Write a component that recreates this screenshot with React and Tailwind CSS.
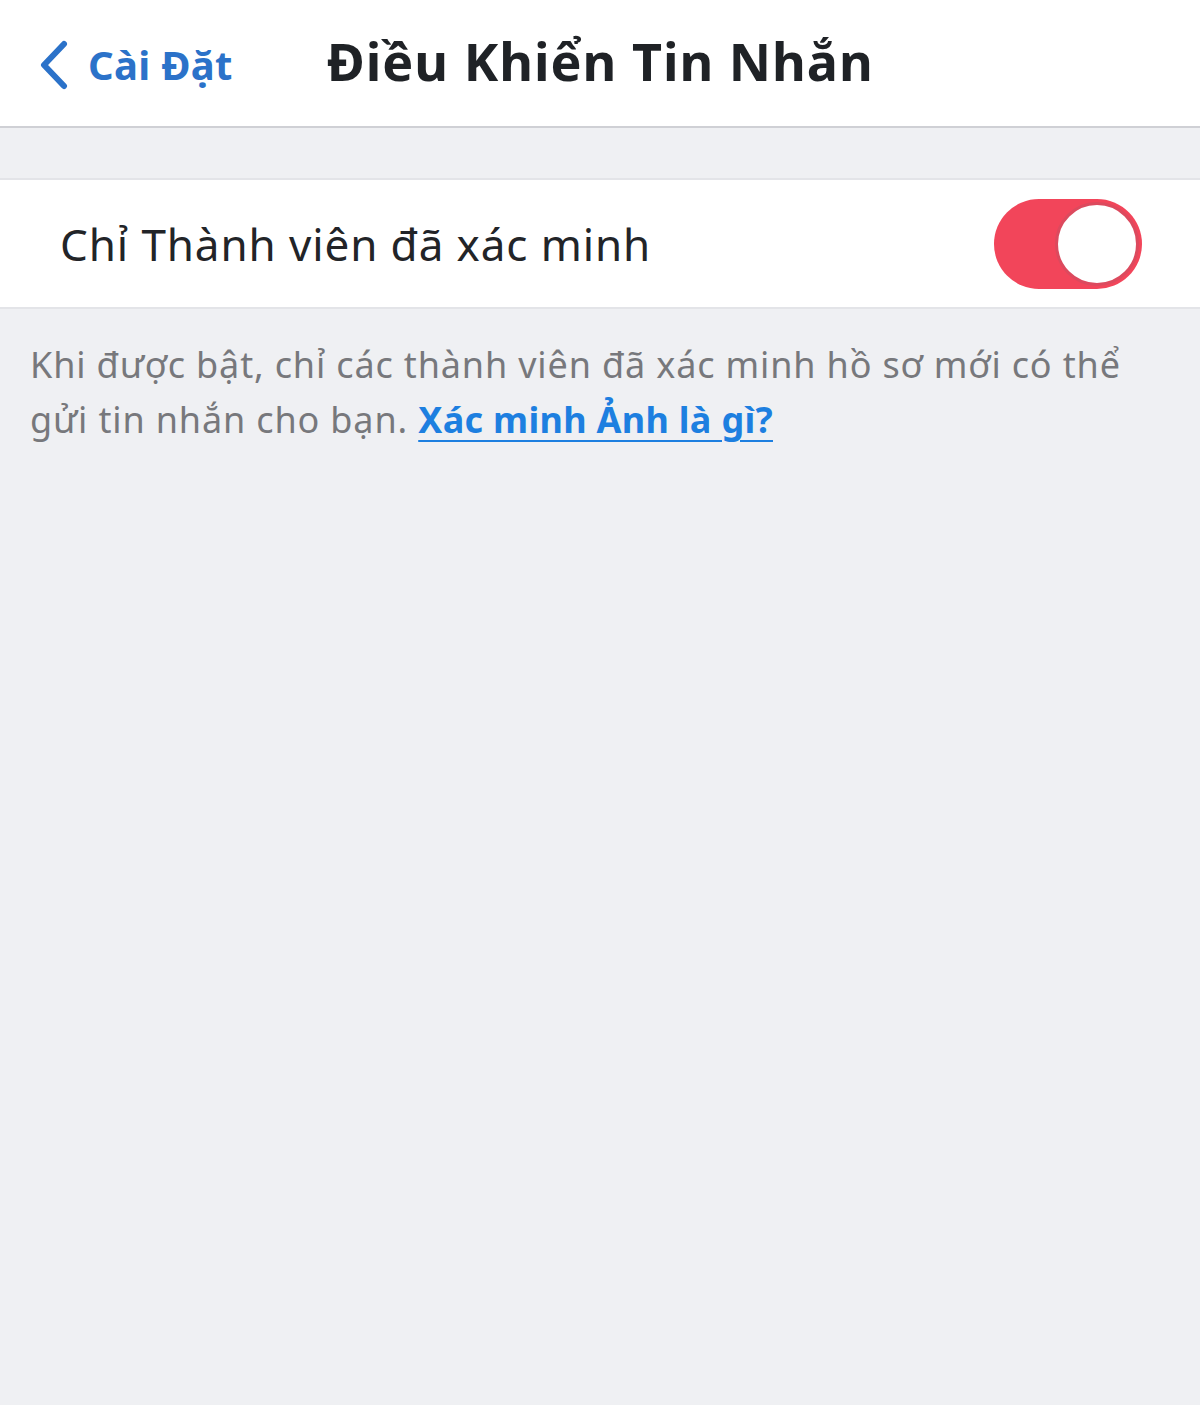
export default function App() {
  return (
    <div className="min-h-[1405px] bg-[#eff0f3]" style={{ fontFamily: '"Noto Sans", Lato, sans-serif' }}>
      <div className="h-[128px] bg-white border-b-2 border-[#cfd0d5] flex items-center">
        <div className="flex items-center pl-[38px] pt-[4px]">
          <svg width="32" height="50" viewBox="0 0 32 50" fill="none">
            <path d="M26 4 L6 25 L26 46" stroke="#2b72c9" strokeWidth="6" strokeLinecap="round" strokeLinejoin="round" />
          </svg>
          <span className="ml-[18px] text-[40px] font-bold text-[#2b72c9] tracking-[0.3px]">Cài Đặt</span>
        </div>
        <h1 className="ml-[94px] text-[52px] font-bold text-[#1f2226] tracking-[1px] -mt-[4px]">Điều Khiển Tin Nhắn</h1>
      </div>
      <div className="h-[50px]" />
      <div className="h-[131px] bg-white border-y-2 border-[#e3e4e8] flex items-center justify-between pl-[60px] pr-[58px]">
        <span className="text-[44px] text-[#222428] tracking-[0.9px]">Chỉ Thành viên đã xác minh</span>
        <div className="w-[148px] h-[90px] rounded-full bg-[#f2455a] relative">
          <div className="absolute right-[3px] top-[3px] w-[84px] h-[84px] rounded-full bg-white border-[3px] border-[#dc4a5e]" />
        </div>
      </div>
      <p className="px-[30px] pt-[28px] pr-[50px] text-[36px] leading-[55px] text-[#77787c] tracking-[0.85px]">
        Khi được bật, chỉ các thành viên đã xác minh hồ sơ mới có thể gửi tin nhắn cho bạn.{' '}
        <a className="font-bold text-[#1d7fe0] underline underline-offset-[7px] decoration-[1.5px] tracking-[0.3px]">Xác minh Ảnh là gì?</a>
      </p>
    </div>
  )
}
